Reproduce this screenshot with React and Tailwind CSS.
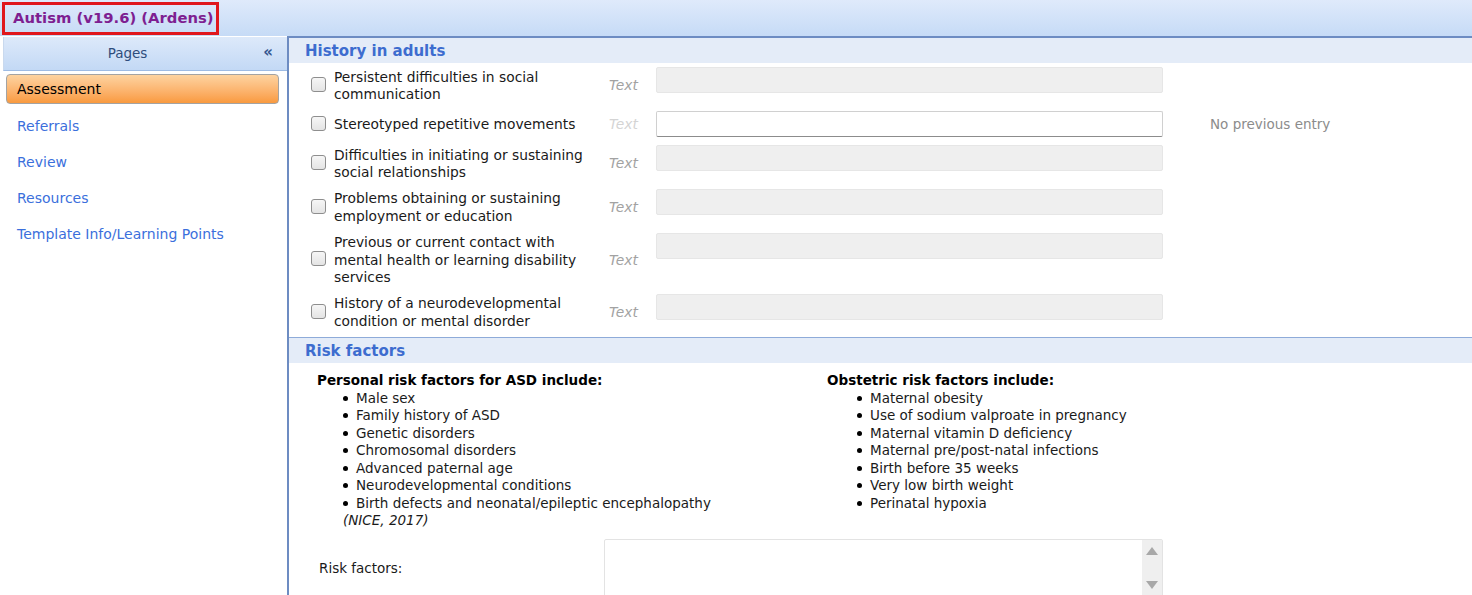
import React from "react";

const pages = ["Referrals", "Review", "Resources", "Template Info/Learning Points"];

const historyRows = [
  { lines: ["Persistent difficulties in social", "communication"] },
  { lines: ["Stereotyped repetitive movements"], active: true },
  { lines: ["Difficulties in initiating or sustaining", "social relationships"] },
  { lines: ["Problems obtaining or sustaining", "employment or education"] },
  { lines: ["Previous or current contact with", "mental health or learning disability", "services"] },
  { lines: ["History of a neurodevelopmental", "condition or mental disorder"] },
];

const personal = [
  "Male sex",
  "Family history of ASD",
  "Genetic disorders",
  "Chromosomal disorders",
  "Advanced paternal age",
  "Neurodevelopmental conditions",
  "Birth defects and neonatal/epileptic encephalopathy",
];

const obstetric = [
  "Maternal obesity",
  "Use of sodium valproate in pregnancy",
  "Maternal vitamin D deficiency",
  "Maternal pre/post-natal infections",
  "Birth before 35 weeks",
  "Very low birth weight",
  "Perinatal hypoxia",
];

const Checkbox = () => (
  <span className="w-[15px] h-[15px] shrink-0 rounded-[3px] border border-[#8e8e8e] bg-linear-to-b from-[#f6f6f6] to-[#e4e4e4]" />
);

const SectionHeader = ({ title }) => (
  <div className="h-[25px] bg-[#e4ecf8] pl-[16px] pt-[2px] flex items-center">
    <span className="text-[15px] font-bold text-[#3d6ccf]">{title}</span>
  </div>
);

const BulletList = ({ items }) => (
  <ul className="pl-[26px]">
    {items.map((item) => (
      <li key={item} className="flex items-center gap-[8px] whitespace-nowrap">
        <span className="w-[5px] h-[5px] rounded-full bg-black shrink-0" />
        {item}
      </li>
    ))}
  </ul>
);

export default function App() {
  return (
    <div className="w-[1472px] h-[595px] overflow-hidden bg-white font-['DejaVu_Sans',sans-serif] text-[13.5px] text-[#1a1a1a]">
      {/* Title bar */}
      <div className="h-[36px] bg-linear-to-b from-[#dfeafb] to-[#c6dbf6] pl-[2px] pt-[2px]">
        <div className="w-[217px] h-[33px] border-[3px] border-[#e0171d] overflow-hidden flex items-center pl-[8px]">
          <span className="whitespace-nowrap text-[14.8px] font-bold text-[#7e1f91]">
            Autism (v19.6) (Ardens)
          </span>
        </div>
      </div>

      <div className="flex h-[559px]">
        {/* Sidebar */}
        <div className="w-[287px] pl-[3px] shrink-0 text-[14px]">
          <div className="h-[34px] mt-[1px] flex items-center bg-linear-to-b from-[#dde9fa] to-[#c3d9f5] border-b border-[#9dbbe4] border-l border-l-[#c9d9ee]">
            <span className="flex-1 text-center text-[#2e4d7c] text-[13.5px] pl-[2px]">Pages</span>
            <span className="w-[38px] text-center text-[15px] font-bold text-[#34558e] -mt-[3px]">«</span>
          </div>
          <div className="pt-[3px] pr-[8px] pl-[3px]">
            <div className="h-[30px] rounded-[4px] border border-[#a3a3a3] bg-linear-to-b from-[#fdd3a0] to-[#f99a3e] flex items-center pl-[10px] text-black">
              Assessment
            </div>
          </div>
          <div className="pt-[4px]">
            {pages.map((p) => (
              <div key={p} className="h-[36px] flex items-center pl-[14px] text-[#3b6fdc]">
                {p}
              </div>
            ))}
          </div>
        </div>

        {/* Content */}
        <div className="flex-1 border-l-2 border-t-2 border-[#6d8cc2]">
          <SectionHeader title="History in adults" />
          <div className="pt-[4px] pl-[22px] flex flex-col gap-[8.5px]">
            {historyRows.map((row, i) => (
              <div key={i} className="flex items-center min-h-[26px]">
                <Checkbox />
                <div className="relative top-[1.5px] w-[283px] pl-[8px] leading-[17.6px] text-[13.8px] whitespace-nowrap">
                  {row.lines.map((l) => (
                    <div key={l}>{l}</div>
                  ))}
                </div>
                <span
                  className={`relative top-[1px] w-[47px] italic text-[13.8px] ${row.active ? "text-[#d4d4d4]" : "text-[#a2a2a2]"}`}
                >
                  Text
                </span>
                <div
                  className={`self-start w-[507px] h-[26px] rounded-[2px] ${
                    row.active
                      ? "bg-white border border-[#d0d0d0] border-b-[#8c8c8c]"
                      : "bg-[#efefef] border border-[#e6e6e6]"
                  }`}
                />
                {row.active && (
                  <span className="ml-[47px] text-[#8c8c8c]">No previous entry</span>
                )}
              </div>
            ))}
          </div>

          <div className="mt-[8px] border-t border-[#8eabd9]">
            <SectionHeader title="Risk factors" />
          </div>

          <div className="pt-[9px] pl-[28px] leading-[17.5px] flex">
            <div className="w-[510px]">
              <div className="font-bold text-black">Personal risk factors for ASD include:</div>
              <BulletList items={personal} />
              <div className="pl-[26px] italic">(NICE, 2017)</div>
            </div>
            <div>
              <div className="font-bold text-black">Obstetric risk factors include:</div>
              <div className="pl-[4px]">
                <BulletList items={obstetric} />
              </div>
            </div>
          </div>

          <div className="flex mt-[9px] pl-[30px]">
            <div className="w-[285px] pt-[19px]">Risk factors:</div>
            <div className="w-[559px] h-[70px] border border-[#e3e3e3] rounded-[2px] flex justify-end">
              <div className="w-[20px] bg-[#efefef] flex flex-col items-center pt-[7px] gap-[26px]">
                <span className="w-0 h-0 border-x-[6px] border-x-transparent border-b-[8px] border-b-[#a8a8a8]" />
                <span className="w-0 h-0 border-x-[6px] border-x-transparent border-t-[8px] border-t-[#a8a8a8]" />
              </div>
            </div>
          </div>
        </div>
      </div>
    </div>
  );
}
